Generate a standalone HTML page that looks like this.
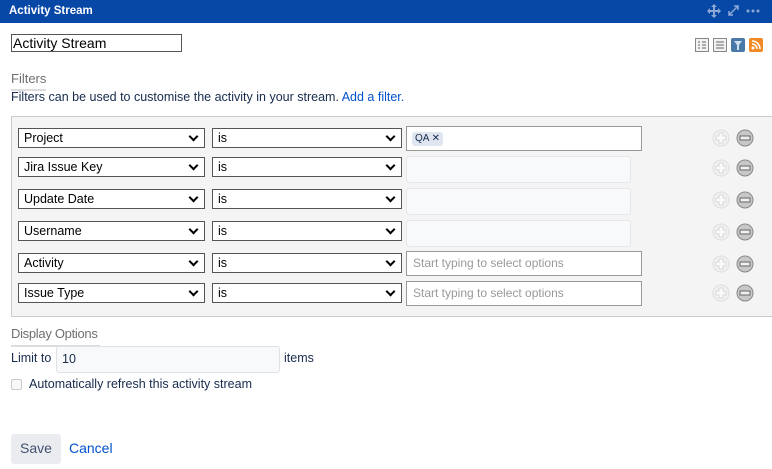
<!DOCTYPE html>
<html><head><style>
*{box-sizing:border-box;margin:0;padding:0}
body{width:772px;height:469px;overflow:hidden;background:#fff;font-family:"Liberation Sans",sans-serif;font-size:12.5px;color:#172b4d;position:relative}
.a{position:absolute;white-space:nowrap}
.hdr{left:0;top:0;width:772px;height:23px;background:#0747a6;color:#fff;font-weight:bold;font-size:11.5px;line-height:23px;padding-left:9px}
.sel{position:absolute;height:20px;border:1px solid #555;background:#fff;font-size:12.5px;line-height:18px;padding-left:5px;color:#000}
.sel:after{content:"";position:absolute;right:7px;top:4px;width:5px;height:5px;border-right:2px solid #000;border-bottom:2px solid #000;transform:rotate(45deg)}
.inp{position:absolute;border:1px solid #999;background:#fff}
.dis{position:absolute;border:1px solid #e5e7ea;background:#f8f9fa;border-radius:3px}
.ph{color:#999;font-size:12px;line-height:22px;padding-left:6px}
.ic{position:absolute}
a{color:#0052cc;text-decoration:none}
</style></head><body>
<div class="a hdr">Activity Stream</div>
<svg class="ic" style="left:707px;top:4px" width="14" height="14" viewBox="0 0 14 14" fill="#8ea8d6"><path d="M7 0l3 3H8v3h3V4l3 3-3 3V8H8v3h2l-3 3-3-3h2V8H3v2L0 7l3-3v2h3V3H4z"/></svg>
<svg class="ic" style="left:727px;top:4px" width="13" height="13" viewBox="0 0 13 13" stroke="#8ea8d6" stroke-width="1.5" fill="none"><path d="M2 11l9-9M7 2h4v4M2 7v4h4"/></svg>
<svg class="ic" style="left:746px;top:9px" width="14" height="4" fill="#8ea8d6"><circle cx="2" cy="2" r="1.5"/><circle cx="7" cy="2" r="1.5"/><circle cx="12" cy="2" r="1.5"/></svg>
<div class="a" style="left:11px;top:34px;width:171px;height:18px;border:1px solid #555;font-size:14px;line-height:16px;padding-left:1px;color:#000">Activity Stream</div>
<svg class="ic" style="left:695px;top:38px" width="14" height="14"><rect x=".5" y=".5" width="13" height="13" fill="#f2f2f2" stroke="#888"/><path d="M3 4h2M3 7h2M3 10h2M7 4h4M7 7h4M7 10h4" stroke="#666"/></svg>
<svg class="ic" style="left:713px;top:38px" width="14" height="14"><rect x=".5" y=".5" width="13" height="13" fill="#f2f2f2" stroke="#888"/><path d="M3 4h8M3 7h8M3 10h8" stroke="#666"/></svg>
<svg class="ic" style="left:731px;top:38px" width="14" height="14"><rect width="14" height="14" rx="2" fill="#4a79a8"/><path d="M3 3h8L8 7v5H6V7z" fill="#cfe0f0"/></svg>
<svg class="ic" style="left:749px;top:38px" width="14" height="14"><rect width="14" height="14" rx="2" fill="#f08a24"/><circle cx="4" cy="10" r="1.5" fill="#fff"/><path d="M3 6a5 5 0 0 1 5 5M3 3a8 8 0 0 1 8 8" stroke="#fff" stroke-width="1.6" fill="none"/></svg>
<div class="a" style="left:11px;top:71px;color:#707070;font-size:13px;padding-bottom:3px;border-bottom:2px solid #ddd">Filters</div>
<div class="a" style="left:11px;top:90px;color:#172b4d">Filters can be used to customise the activity in your stream. <a>Add a filter.</a></div>
<div class="a" style="left:11px;top:116px;width:764px;height:201px;background:#f4f4f4;border:1px solid #ccc"></div>

<div class="sel" style="left:18px;top:128px;width:187px">Project</div>
<div class="sel" style="left:212px;top:128px;width:190px">is</div>
<div class="inp" style="left:406px;top:126px;width:236px;height:25px"><span style="position:absolute;left:5px;top:5px;background:#dfe6f0;border-radius:3px;font-size:10px;padding:1px 3px;line-height:12px">QA ✕</span></div>

<div class="sel" style="left:18px;top:157px;width:187px">Jira Issue Key</div>
<div class="sel" style="left:212px;top:157px;width:190px">is</div>
<div class="dis" style="left:406px;top:156px;width:225px;height:27px"></div>

<div class="sel" style="left:18px;top:189px;width:187px">Update Date</div>
<div class="sel" style="left:212px;top:189px;width:190px">is</div>
<div class="dis" style="left:406px;top:188px;width:225px;height:27px"></div>

<div class="sel" style="left:18px;top:221px;width:187px">Username</div>
<div class="sel" style="left:212px;top:221px;width:190px">is</div>
<div class="dis" style="left:406px;top:220px;width:225px;height:27px"></div>

<div class="sel" style="left:18px;top:253px;width:187px">Activity</div>
<div class="sel" style="left:212px;top:253px;width:190px">is</div>
<div class="inp ph" style="left:406px;top:251px;width:236px;height:25px">Start typing to select options</div>

<div class="sel" style="left:18px;top:283px;width:187px">Issue Type</div>
<div class="sel" style="left:212px;top:283px;width:190px">is</div>
<div class="inp ph" style="left:406px;top:281px;width:236px;height:25px">Start typing to select options</div>

<svg class="ic" style="left:712px;top:129px" width="44" height="180">
<defs>
<g id="p"><circle cx="9" cy="9" r="8" fill="#f2f2f2" stroke="#ddd"/><path d="M7 4h4v3h3v4h-3v3H7v-3H4V7h3z" fill="#fafafa" stroke="#d8d8d8"/></g>
<g id="m"><circle cx="33" cy="9" r="8" fill="#c8c8c8" stroke="#888"/><rect x="28" y="7" width="10" height="4" fill="#eee" stroke="#666"/></g>
</defs>
<use href="#p" y="0"/><use href="#m" y="0"/>
<use href="#p" y="30"/><use href="#m" y="30"/>
<use href="#p" y="62"/><use href="#m" y="62"/>
<use href="#p" y="94"/><use href="#m" y="94"/>
<use href="#p" y="126"/><use href="#m" y="126"/>
<use href="#p" y="155"/><use href="#m" y="155"/>
</svg>

<div class="a" style="left:11px;top:326px;color:#707070;padding-bottom:4px;border-bottom:2px solid #ddd;width:89px;font-size:13px;letter-spacing:-0.3px">Display Options</div>
<div class="a" style="left:11px;top:351px">Limit to</div>
<div class="a" style="left:56px;top:346px;width:224px;height:27px;border:1px solid #dfe1e6;background:#f8f9fa;border-radius:3px;padding-left:5px;line-height:25px">10</div>
<div class="a" style="left:284px;top:351px">items</div>
<div class="a" style="left:11px;top:379px;width:11px;height:11px;border:1px solid #ccc;border-radius:2px;background:#f8f8f8"></div>
<div class="a" style="left:29px;top:377px">Automatically refresh this activity stream</div>
<div class="a" style="left:11px;top:434px;width:50px;height:30px;background:#ebecf0;border-radius:3px;text-align:center;line-height:29px;color:#42526e;font-size:14px">Save</div>
<div class="a" style="left:69px;top:440px;font-size:14px"><a>Cancel</a></div>
</body></html>
